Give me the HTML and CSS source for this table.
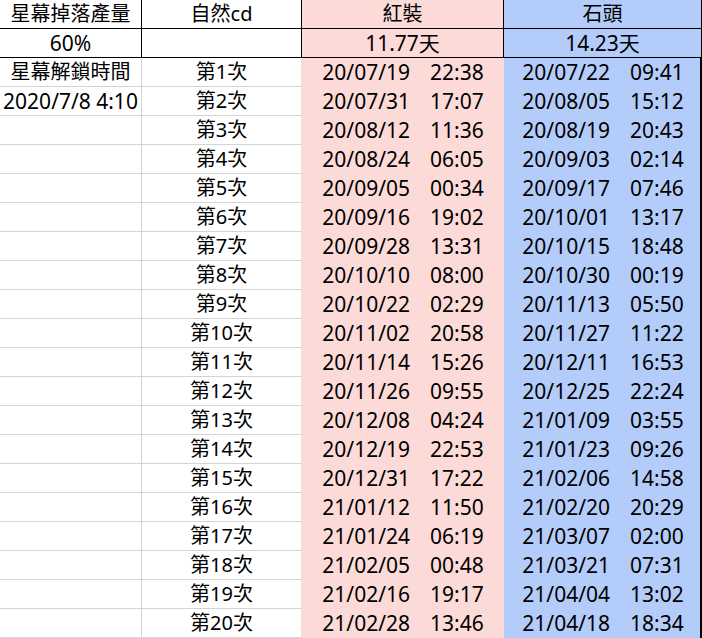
FILE: index.html
```html
<!DOCTYPE html>
<html lang="zh-Hant">
<head>
<meta charset="utf-8">
<title>星幕</title>
<link rel="stylesheet" href="styles.css">
</head>
<body>
<div class="sheet">
  <div class="c h">星幕掉落產量</div>
  <div class="c h">自然cd</div>
  <div class="c h red">紅裝</div>
  <div class="c h blue hd">石頭</div>

  <div class="c h num">60%</div>
  <div class="c h"></div>
  <div class="c h red num">11.77天</div>
  <div class="c h blue hd num">14.23天</div>

  <div class="c g">星幕解鎖時間</div><div class="c g gb">第1次</div><div class="c r"><span>20/07/19</span><span>22:38</span></div><div class="c bl"><span>20/07/22</span><span>09:41</span></div>
  <div class="c g num">2020/7/8 4:10</div><div class="c g gb">第2次</div><div class="c r"><span>20/07/31</span><span>17:07</span></div><div class="c bl"><span>20/08/05</span><span>15:12</span></div>
  <div class="c g"></div><div class="c g gb">第3次</div><div class="c r"><span>20/08/12</span><span>11:36</span></div><div class="c bl"><span>20/08/19</span><span>20:43</span></div>
  <div class="c g"></div><div class="c g gb">第4次</div><div class="c r"><span>20/08/24</span><span>06:05</span></div><div class="c bl"><span>20/09/03</span><span>02:14</span></div>
  <div class="c g"></div><div class="c g gb">第5次</div><div class="c r"><span>20/09/05</span><span>00:34</span></div><div class="c bl"><span>20/09/17</span><span>07:46</span></div>
  <div class="c g"></div><div class="c g gb">第6次</div><div class="c r"><span>20/09/16</span><span>19:02</span></div><div class="c bl"><span>20/10/01</span><span>13:17</span></div>
  <div class="c g"></div><div class="c g gb">第7次</div><div class="c r"><span>20/09/28</span><span>13:31</span></div><div class="c bl"><span>20/10/15</span><span>18:48</span></div>
  <div class="c g"></div><div class="c g gb">第8次</div><div class="c r"><span>20/10/10</span><span>08:00</span></div><div class="c bl"><span>20/10/30</span><span>00:19</span></div>
  <div class="c g"></div><div class="c g gb">第9次</div><div class="c r"><span>20/10/22</span><span>02:29</span></div><div class="c bl"><span>20/11/13</span><span>05:50</span></div>
  <div class="c g"></div><div class="c g gb">第10次</div><div class="c r"><span>20/11/02</span><span>20:58</span></div><div class="c bl"><span>20/11/27</span><span>11:22</span></div>
  <div class="c g"></div><div class="c g gb">第11次</div><div class="c r"><span>20/11/14</span><span>15:26</span></div><div class="c bl"><span>20/12/11</span><span>16:53</span></div>
  <div class="c g"></div><div class="c g gb">第12次</div><div class="c r"><span>20/11/26</span><span>09:55</span></div><div class="c bl"><span>20/12/25</span><span>22:24</span></div>
  <div class="c g"></div><div class="c g gb">第13次</div><div class="c r"><span>20/12/08</span><span>04:24</span></div><div class="c bl"><span>21/01/09</span><span>03:55</span></div>
  <div class="c g"></div><div class="c g gb">第14次</div><div class="c r"><span>20/12/19</span><span>22:53</span></div><div class="c bl"><span>21/01/23</span><span>09:26</span></div>
  <div class="c g"></div><div class="c g gb">第15次</div><div class="c r"><span>20/12/31</span><span>17:22</span></div><div class="c bl"><span>21/02/06</span><span>14:58</span></div>
  <div class="c g"></div><div class="c g gb">第16次</div><div class="c r"><span>21/01/12</span><span>11:50</span></div><div class="c bl"><span>21/02/20</span><span>20:29</span></div>
  <div class="c g"></div><div class="c g gb">第17次</div><div class="c r"><span>21/01/24</span><span>06:19</span></div><div class="c bl"><span>21/03/07</span><span>02:00</span></div>
  <div class="c g"></div><div class="c g gb">第18次</div><div class="c r"><span>21/02/05</span><span>00:48</span></div><div class="c bl"><span>21/03/21</span><span>07:31</span></div>
  <div class="c g"></div><div class="c g gb">第19次</div><div class="c r"><span>21/02/16</span><span>19:17</span></div><div class="c bl"><span>21/04/04</span><span>13:02</span></div>
  <div class="c g"></div><div class="c g gb">第20次</div><div class="c r"><span>21/02/28</span><span>13:46</span></div><div class="c bl"><span>21/04/18</span><span>18:34</span></div>
</div>
</body>
</html>
```
FILE: styles.css
```css
html, body {
  margin: 0;
  padding: 0;
  background: #ffffff;
}

.sheet {
  display: grid;
  grid-template-columns: 142px 160px 202px 198px;
  grid-auto-rows: 29px;
  width: 702px;
  font-family: "Noto Sans", "Noto Sans CJK TC", sans-serif;
  font-size: 20px;
  color: #000000;
}

.c {
  box-sizing: border-box;
  display: flex;
  align-items: center;
  justify-content: center;
  white-space: nowrap;
  line-height: 1;
}

.num {
  font-size: 21px;
}

.h {
  border-right: 1px solid #000000;
  border-bottom: 1px solid #000000;
}

.red {
  background: #fcdad8;
}

.blue {
  background: #b4ccf9;
}

.g {
  border-right: 1px solid #d4d4d4;
  border-bottom: 1px solid #d4d4d4;
}

.gb {
  border-right-color: #fcdad8;
}

.r {
  background: #fcdad8;
  gap: 20px;
  font-size: 21px;
}

.bl {
  background: #b4ccf9;
  border-right: 2px solid #000000;
  gap: 20px;
  padding-left: 2px;
  font-size: 21px;
}
```
